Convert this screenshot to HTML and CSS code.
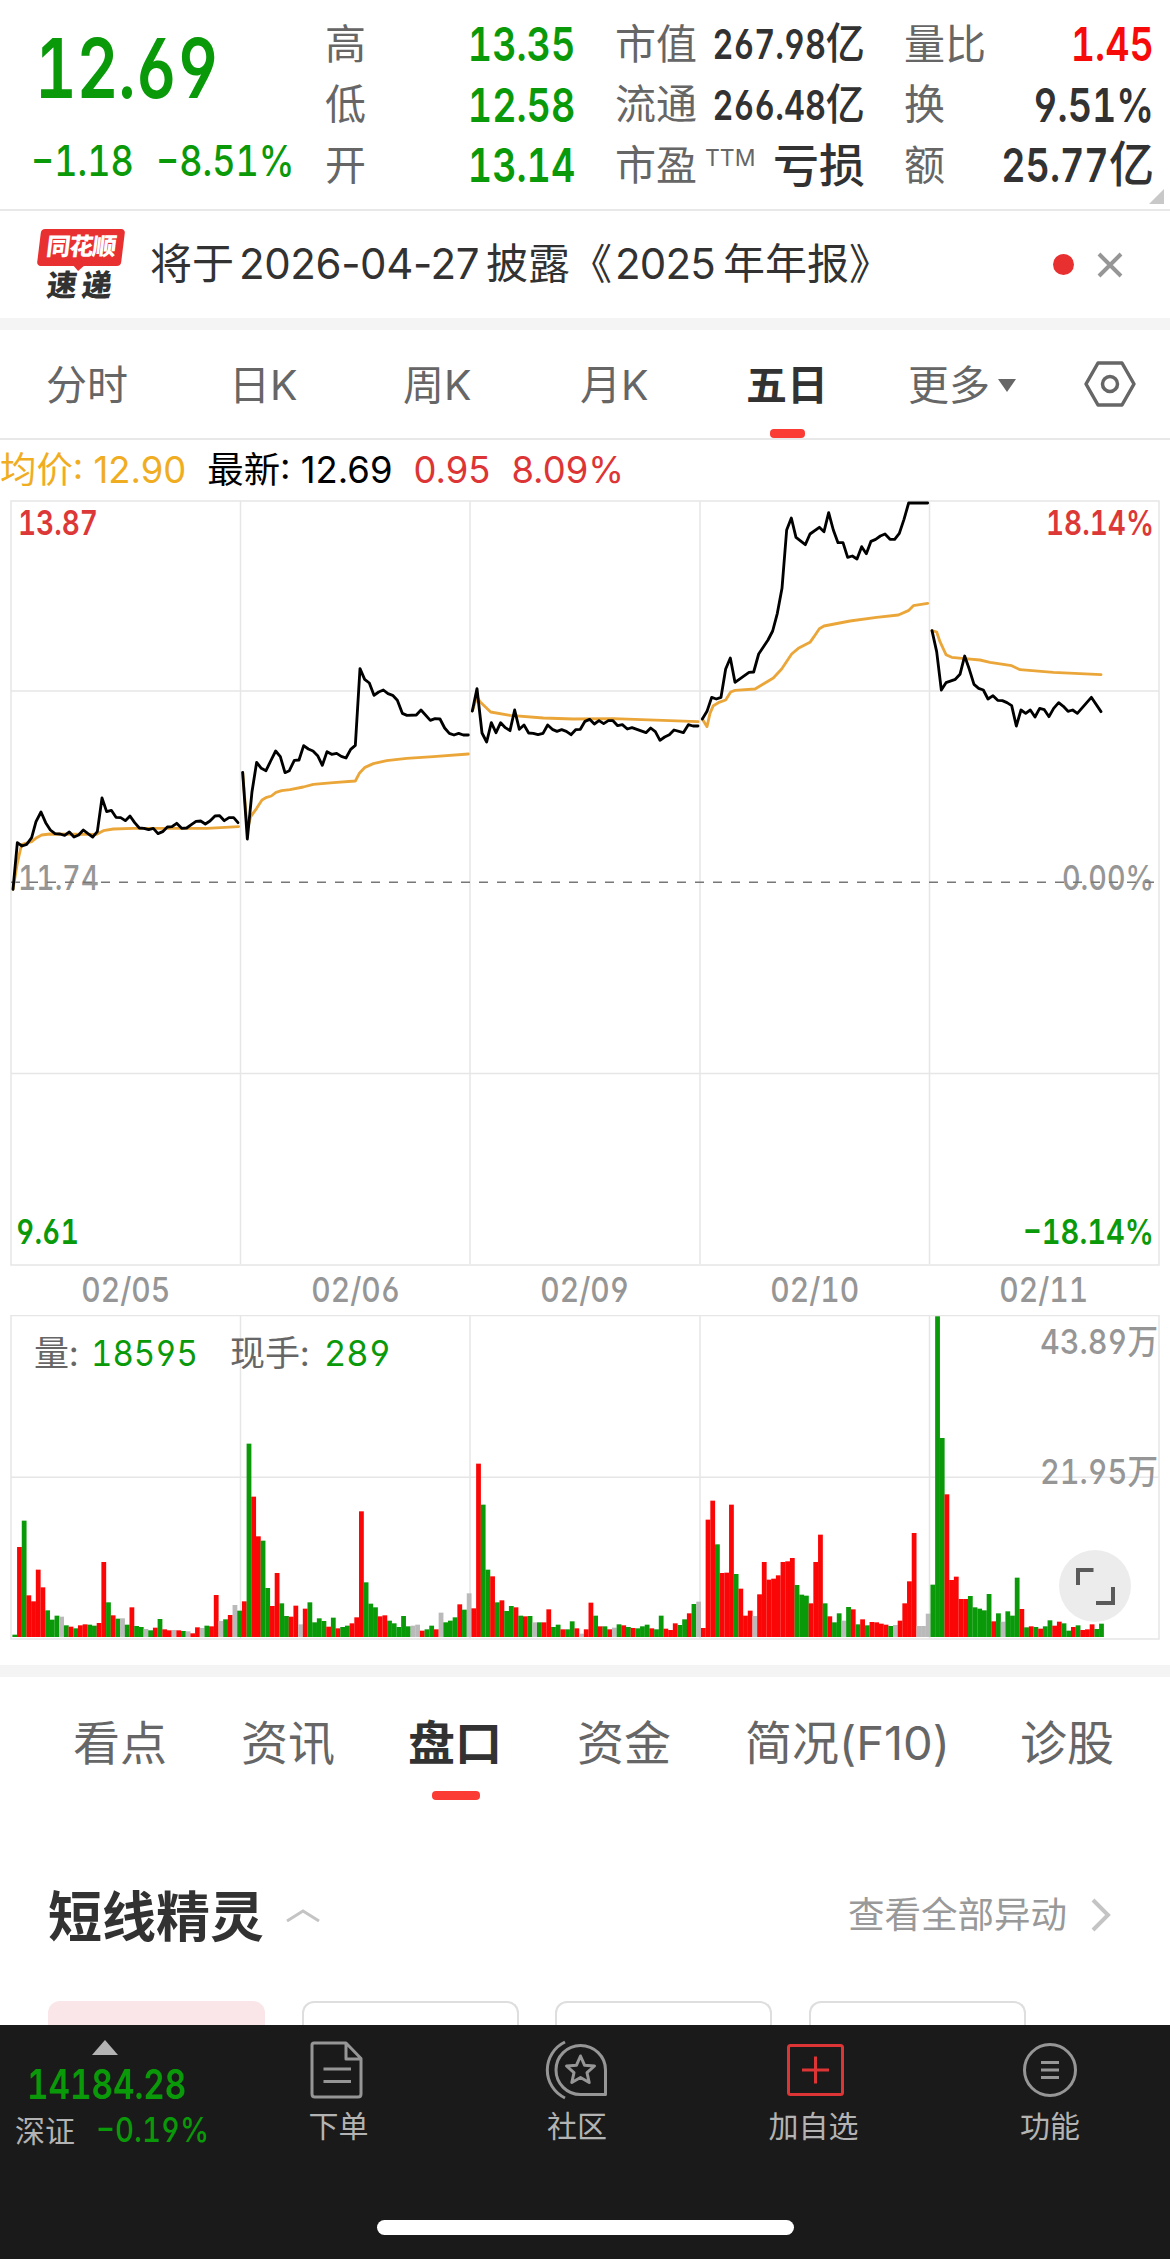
FILE: index.html
```html
<!DOCTYPE html>
<html lang="zh-CN">
<head>
    <meta charset="UTF-8">
    <meta name="viewport" content="width=device-width, initial-scale=1.0">
    <title>五日行情</title>
    <link rel="stylesheet" href="styles.css">
</head>
<body>
    <header class="quote">
        <div class="price">
            <div class="last num">12.69</div>
            <div class="change">
                <span class="num">−1.18</span>
                <span class="num">−8.51%</span>
            </div>
        </div>
        <div class="stats">
            <div class="stat"><label>高</label><b class="num down">13.35</b></div>
            <div class="stat"><label>低</label><b class="num down">12.58</b></div>
            <div class="stat"><label>开</label><b class="num down">13.14</b></div>
        </div>
        <div class="stats">
            <div class="stat"><label>市值</label><b class="num small">267.98<i>亿</i></b></div>
            <div class="stat"><label>流通</label><b class="num small">266.48<i>亿</i></b></div>
            <div class="stat"><label>市盈<sup>TTM</sup></label><b class="cjk">亏损</b></div>
        </div>
        <div class="stats">
            <div class="stat"><label>量比</label><b class="num up">1.45</b></div>
            <div class="stat"><label>换</label><b class="num">9.51%</b></div>
            <div class="stat"><label>额</label><b class="num">25.77<i>亿</i></b></div>
        </div>
        <div class="corner"></div>
    </header>

    <div class="notice">
        <div class="logo">
            <div class="logo-top"><span>同花顺</span></div>
            <div class="logo-bottom">速递</div>
        </div>
        <p class="notice-text">将于<span class="date">2026-04-27</span>披露《<span class="year">2025</span>年年报》</p>
        <i class="dot"></i>
        <svg class="close" width="28" height="28" viewBox="0 0 28 28"><path d="M3 3L25 25M25 3L3 25"/></svg>
    </div>

    <nav class="periods">
        <a class="p1">分时</a>
        <a class="p2">日K</a>
        <a class="p3">周K</a>
        <a class="p4">月K</a>
        <a class="p5 active">五日</a>
        <a class="p6">更多<i class="caret"></i></a>
        <svg class="setting" width="54" height="48" viewBox="0 0 54 48">
            <path d="M15 3H39L51 24L39 45H15L3 24Z"/>
            <circle cx="27" cy="24" r="7.5"/>
        </svg>
    </nav>

    <div class="legend">
        <span class="avg">均价: 12.90</span>
        <span>最新: 12.69</span>
        <span class="red">0.95</span>
        <span class="red">8.09%</span>
    </div>

    <svg class="chart" width="1170" height="766" viewBox="0 500 1170 766">
        <g class="grid">
            <path d="M11 501H1159V1265H11ZM11 691H1159M11 1073.5H1159"/>
            <path d="M240.5 501V1264M470 501V1264M700 501V1264M929.5 501V1264"/>
        </g>
        <g class="axis">
            <text class="red" x="18" y="535" textLength="80" lengthAdjust="spacingAndGlyphs">13.87</text>
            <text class="red right" x="1154" y="535" textLength="108" lengthAdjust="spacingAndGlyphs">18.14%</text>
            <text class="flat" x="18" y="889.5" textLength="81" lengthAdjust="spacingAndGlyphs">11.74</text>
            <text class="flat right" x="1154" y="889.5" textLength="92" lengthAdjust="spacingAndGlyphs">0.00%</text>
            <text class="green" x="16" y="1244" textLength="63" lengthAdjust="spacingAndGlyphs">9.61</text>
            <text class="green right" x="1154" y="1244" textLength="131" lengthAdjust="spacingAndGlyphs">−18.14%</text>
        </g>
        <path class="zero" d="M11 882.3H1154"/>
        <!-- three units per pixel inside each group -->
        <g class="line" transform="translate(0 600) scale(.33333)">
            <polyline class="mean" points="39,868 52,790 62,745 66,733 95,725 110,713 125,705 150,702 290,703 310,692 340,687 400,685 620,685 716,680"/>
            <polyline points="39,868 52,728 66,738 80,733 95,713 108,665 123,636 137,668 151,690 165,701 180,702 194,706 208,696 222,711 236,705 250,690 264,701 278,711 292,695 306,594 320,635 334,631 348,652 362,653 376,662 390,648 404,668 418,684 432,685 446,689 460,685 474,701 488,695 502,681 516,680 530,670 545,685 560,684 574,674 588,664 602,663 616,672 630,663 645,648 659,647 673,662 687,653 701,653 714,668"/>
            <polyline class="mean" points="728,517 742,690 752,650 770,625 786,600 800,592 814,588 828,577 845,572 870,569 910,561 940,553 1000,548 1066,543 1078,520 1095,502 1120,491 1160,482 1220,475 1300,470 1405,462"/>
            <polyline points="728,517 742,717 756,575 770,487 784,505 798,512 812,483 827,453 841,470 855,518 868,512 883,481 897,480 911,437 925,447 939,453 953,467 967,496 981,455 995,463 1010,460 1024,469 1038,474 1052,448 1066,436 1080,206 1094,238 1108,249 1122,286 1136,276 1150,270 1164,281 1178,286 1192,301 1207,340 1221,346 1249,345 1263,330 1291,361 1305,356 1320,357 1334,384 1348,400 1362,405 1376,400 1390,405 1405,405"/>
        </g>
        <g class="line" transform="translate(460 480) scale(.33333)">
            <polyline class="mean" points="37,693 51,650 60,665 92,696 150,706 250,714 340,717 460,716 714,725"/>
            <polyline points="37,693 51,626 66,759 80,786 94,728 108,758 122,728 136,743 150,752 164,690 178,748 192,735 206,759 220,760 234,764 249,760 263,735 277,748 291,754 305,749 319,754 333,764 347,749 361,748 375,724 389,718 403,732 417,722 431,731 445,722 459,722 473,737 487,734 502,747 516,743 558,758 572,744 586,755 600,781 614,771 628,764 642,750 670,758 685,734 699,738 714,738"/>
            <polyline class="mean" points="727,717 741,740 750,700 760,677 775,668 797,660 812,636 825,631 885,627 910,612 940,594 965,567 995,522 1015,505 1050,487 1062,470 1078,446 1092,438 1170,423 1250,412 1315,405 1345,392 1360,377 1403,370"/>
            <polyline points="727,717 741,694 755,652 769,657 783,652 797,567 811,534 825,607 867,577 881,576 896,522 924,480 938,453 952,400 966,325 980,150 994,114 1008,172 1036,194 1050,162 1078,142 1092,155 1106,98 1120,150 1134,188 1149,188 1163,232 1177,228 1191,237 1205,200 1219,221 1233,184 1247,178 1261,168 1275,162 1290,178 1304,178 1318,160 1332,118 1346,69 1403,69"/>
        </g>
        <g class="line" transform="translate(800 480) scale(.33333)">
            <polyline class="mean" points="396,452 410,456 420,485 438,524 455,532 494,536 540,540 570,547 635,557 660,569 760,577 903,584"/>
            <polyline points="396,452 410,515 424,630 438,608 466,598 480,583 494,528 508,568 522,613 536,625 550,630 564,657 579,647 593,661 607,662 621,668 635,677 649,738 663,690 677,700 691,690 705,711 719,685 733,689 747,710 761,685 776,668 790,679 804,694 818,690 832,700 874,652 903,695"/>
        </g>
    </svg>

    <div class="dates">
        <span class="num">02/05</span>
        <span class="num">02/06</span>
        <span class="num">02/09</span>
        <span class="num">02/10</span>
        <span class="num">02/11</span>
    </div>

    <div class="volume">
        <svg class="chart" width="1170" height="350" viewBox="0 1315 1170 350">
            <g class="grid">
                <path d="M11 1315.5H1159V1639H11ZM11 1477.3H1159"/>
                <path d="M240.5 1315V1639M470 1315V1639M700 1315V1639M929.5 1315V1639"/>
            </g>
            <g id="bars"></g>
            <g class="axis">
                <text class="flat right" x="1158" y="1353.7" textLength="118" lengthAdjust="spacingAndGlyphs">43.89万</text>
                <text class="flat right" x="1158" y="1484" textLength="118" lengthAdjust="spacingAndGlyphs">21.95万</text>
            </g>
            <g class="now">
                <text x="34" y="1366">量:</text>
                <text class="green" x="91" y="1366" textLength="107" lengthAdjust="spacingAndGlyphs">18595</text>
                <text x="230" y="1366">现手:</text>
                <text class="green" x="324" y="1366" textLength="67" lengthAdjust="spacingAndGlyphs">289</text>
            </g>
        </svg>
        <button class="expand">
            <svg width="40" height="40" viewBox="0 0 40 40"><path d="M3 19V4H18.5M21 37H38V21"/></svg>
        </button>
    </div>

    <nav class="sections">
        <a class="s1">看点</a>
        <a class="s2">资讯</a>
        <a class="s3 active">盘口</a>
        <a class="s4">资金</a>
        <a class="s5">简况(F10)</a>
        <a class="s6">诊股</a>
    </nav>

    <section class="elf">
        <div class="elf-head">
            <h2>短线精灵</h2>
            <svg class="fold" width="36" height="14" viewBox="0 0 36 14"><path d="M2 13L18 3L34 13"/></svg>
            <a class="more">查看全部异动</a>
            <svg class="next" width="22" height="36" viewBox="0 0 22 36"><path d="M3 3L18 18L3 33"/></svg>
        </div>
        <div class="cards">
            <div class="card pink"></div>
            <div class="card"></div>
            <div class="card"></div>
            <div class="card"></div>
        </div>
    </section>

    <footer class="bar">
        <div class="index">
            <i class="tri"></i>
            <div class="index-value num">14184.28</div>
            <div class="index-row"><span>深证</span><span class="num">−0.19%</span></div>
        </div>
        <a class="tool t1">
            <svg width="60" height="60" viewBox="0 0 60 60">
                <path d="M7 3H39L54 18.500V54Q54 57 51 57H8Q5 57 5 54V5Q5 3 7 3ZM39 3V19H54M16.500 29H44M16.500 41.500H44"/>
            </svg>
            <span>下单</span>
        </a>
        <a class="tool t2">
            <svg width="64" height="60" viewBox="0 0 64 60">
                <path d="M20 2A31 31 0 0 0 20 58"/>
                <path d="M35.500 5.500A24.500 24.500 0 0 0 35.500 54.500H60.500V30A25 24.500 0 0 0 35.500 5.500Z"/>
                <path d="M35.500 16L39.500 25.200L49.500 26L42 32.700L44.200 42.500L35.500 37.500L26.800 42.500L29 32.700L21.500 26L31.500 25.200Z"/>
            </svg>
            <span>社区</span>
        </a>
        <a class="tool t3">
            <svg width="60" height="60" viewBox="0 0 60 60">
                <rect x="4.500" y="5.500" width="54" height="49" rx="2"/>
                <path d="M18 30H45M31.500 16.500V43.500"/>
            </svg>
            <span>加自选</span>
        </a>
        <a class="tool t4">
            <svg width="60" height="60" viewBox="0 0 60 60">
                <circle cx="30" cy="30" r="25.500"/>
                <path d="M21 22.500H39M21 30H39M21 37.500H39"/>
            </svg>
            <span>功能</span>
        </a>
        <div class="home"></div>
    </footer>

    <script src="volume.js"></script>
</body>
</html>
```
FILE: styles.css
```css
* {
    box-sizing: border-box;
}

body {
    width: 1170px;
    height: 2259px;
    margin: 0;
    overflow: hidden;
    display: flex;
    flex-direction: column;
    background: #fff;
    color: #323232;
    font-family: "Inter", "Noto Sans CJK SC", sans-serif;
}

svg {
    display: block;
    fill: none;
}

i, b {
    font-style: normal;
}

.num {
    font-feature-settings: "tnum", "cv03", "cv04";
    font-weight: 600;
    white-space: nowrap;
}

.up { color: #f60a0a; }
.down { color: #099909; }

/* quote header */
.quote {
    position: relative;
    display: grid;
    grid-template-columns: 326px 290px 289px 249px;
    height: 211px;
    border-bottom: 2px solid #e8e8e8;
}

.price {
    padding: 19px 0 0 35px;
    color: #099909;
}

.stats {
    width: 249px;
    padding-top: 14px;
}

.last {
    font-size: 82px;
    line-height: 100px;
    transform: scaleX(.785);
    transform-origin: left;
}

.change {
    display: flex;
    margin: 17px 0 0 -4px;
    font-size: 42px;
    line-height: 50px;
}

.change .num {
    width: 125px;
    font-weight: 500;
    transform: scaleX(.855);
    transform-origin: left;
}

.stat {
    display: flex;
    align-items: center;
    justify-content: space-between;
    height: 60.5px;
    line-height: 60px;
}

.stat label {
    margin: -1px -40px 0 -1px;
    color: #666;
    font-size: 41px;
    white-space: nowrap;
}

.stat sup {
    margin-left: 8px;
    font-size: 23px;
    line-height: 0;
    vertical-align: 14px;
}

.stat b {
    font-size: 47px;
    transform: scaleX(.8);
    transform-origin: right;
}

.stat b i {
    display: inline-block;
    margin-left: 8px;
    font-size: 49px;
    font-weight: 500;
    line-height: 1;
    transform: scaleX(1.15);
    transform-origin: right;
}

.stat .small {
    font-size: 41px;
    transform: scaleX(.79);
}

.stat .small i {
    margin-left: 6px;
    font-size: 43px;
}

.stat .cjk {
    font-size: 46px;
    font-weight: 500;
    transform: none;
}

.corner {
    position: absolute;
    right: 6px;
    bottom: 5px;
    border-left: 15px solid transparent;
    border-bottom: 15px solid #c8c8c8;
}

/* notice */
.notice {
    display: flex;
    align-items: center;
    height: 119px;
    padding-left: 37px;
    border-bottom: 12px solid #f4f4f4;
}

.logo {
    width: 88px;
    height: 72px;
}

.logo-top {
    position: relative;
    width: 84px;
    height: 37px;
    margin-left: 2px;
    border-radius: 4px;
    background: #e93030;
    transform: skewX(-7deg);
    text-align: center;
}

.logo-top::after {
    content: "";
    position: absolute;
    left: 36px;
    top: 36px;
    border: 6px solid transparent;
    border-top-color: #e93030;
    border-bottom: 0;
}

.logo-top span {
    display: block;
    color: #fff;
    font-size: 24px;
    line-height: 36px;
    font-weight: 900;
    letter-spacing: -1px;
}

.logo-bottom {
    padding-left: 10px;
    font-size: 30px;
    line-height: 39px;
    font-weight: 900;
    letter-spacing: 5px;
    transform: skewX(-7deg);
    white-space: nowrap;
}

.notice-text {
    width: 903px;
    margin: -1px 0 0 25px;
    font-size: 42px;
    line-height: 60px;
    white-space: nowrap;
}

.date {
    margin: 0 7px 0 5px;
    letter-spacing: -.4px;
}

.year {
    margin: 0 8px 0 3px;
    letter-spacing: -.8px;
}

.dot {
    width: 21px;
    height: 21px;
    border-radius: 50%;
    background: #e93030;
}

.close {
    margin-left: 22px;
    stroke: #969696;
    stroke-width: 4;
}

/* period tabs */
.periods {
    display: grid;
    grid-template-columns: 183px 174px 177px 166px 162px 175px 1fr;
    align-items: center;
    height: 110px;
    padding-left: 46px;
    border-bottom: 2px solid #e8e8e8;
    color: #666;
    font-size: 41px;
    white-space: nowrap;
}

.periods a {
    height: 108px;
    line-height: 111px;
}

.active {
    position: relative;
    color: #323232;
    font-weight: 700;
}

.active::after {
    content: "";
    position: absolute;
    left: 24px;
    bottom: 0;
    width: 35px;
    height: 9px;
    border-radius: 4px;
    background: #fa3c34;
}

.caret {
    display: inline-block;
    margin-left: 8px;
    border: 9.5px solid transparent;
    border-top: 13px solid #666;
    border-bottom: 0;
    vertical-align: 8px;
}

.setting {
    stroke: #666;
    stroke-width: 3.5;
    stroke-linejoin: round;
}

/* chart */
.legend {
    display: flex;
    gap: 21px;
    height: 60px;
    color: #000;
    font-size: 36.400px;
    line-height: 60px;
    white-space: nowrap;
}

.legend .avg {
    color: #f0ad22;
}

.legend .red {
    color: #dd3535;
}

.chart text {
    font-family: "Inter", "Noto Sans CJK SC", sans-serif;
    font-feature-settings: "tnum", "cv03", "cv04";
}

.grid {
    stroke: #e6e6e6;
    stroke-width: 1.5;
}

.axis text {
    font-size: 34.5px;
    font-weight: 600;
}

.axis .right {
    text-anchor: end;
}

.axis .flat {
    fill: #969696;
    font-weight: 500;
}

.axis .red {
    fill: #dd3838;
}

.chart .green {
    fill: #099909;
}

.zero {
    stroke: #777;
    stroke-width: 1.5;
    stroke-dasharray: 9 9;
}

.line polyline {
    stroke: #000;
    stroke-width: 8.5;
    stroke-linejoin: round;
    stroke-linecap: round;
}

.line .mean {
    stroke: #eba63a;
}

.dates {
    display: flex;
    height: 49px;
    padding: 0 11px;
    color: #969696;
    font-size: 34.5px;
    line-height: 47px;
}

.dates .num {
    flex: 1;
    text-align: center;
    font-weight: 500;
    transform: scaleX(.87);
}

.volume {
    position: relative;
    height: 362px;
    border-bottom: 12px solid #f4f4f4;
}

.now {
    font-size: 35px;
    fill: #666;
}

.expand {
    position: absolute;
    left: 1059px;
    top: 235px;
    display: flex;
    align-items: center;
    justify-content: center;
    width: 72px;
    height: 72px;
    padding: 0 1px 1px 0;
    border: 0;
    border-radius: 50%;
    background: #ececec;
}

.expand path {
    stroke: #5a5a5a;
    stroke-width: 4;
}

/* section tabs */
.sections {
    display: grid;
    grid-template-columns: 168px 167px 169px 168px 275px 1fr;
    height: 124px;
    padding-left: 73px;
    color: #666;
    font-size: 47px;
    line-height: 132px;
    white-space: nowrap;
}

.sections .active::after {
    width: 48px;
    top: 114px;
}

.elf {
    height: 224px;
    padding: 81px 48px 0;
}

.elf-head {
    display: flex;
    align-items: center;
    height: 66px;
}

.elf h2 {
    margin: 5px 0 0;
    font-size: 54px;
    line-height: 66px;
    font-weight: 600;
}

.fold {
    margin: 0 0 0 21px;
    stroke: #c4c4c4;
    stroke-width: 3;
}

.more {
    margin-left: auto;
    color: #999;
    font-size: 36.500px;
    line-height: 60px;
}

.next {
    margin: 0 10px 0 23px;
    stroke: #c4c4c4;
    stroke-width: 4;
}

.cards {
    display: flex;
    gap: 36.500px;
    margin-top: 53px;
}

.card {
    width: 217px;
    height: 24px;
    border: 2px solid #dedede;
    border-bottom: 0;
    border-radius: 12px 12px 0 0;
}

.pink {
    border: 0;
    background: #fae6e8;
}

/* bottom bar */
.bar {
    position: relative;
    display: grid;
    grid-template-columns: 215px 247px 230px 243px 230px;
    height: 234px;
    background: #1a1a1a;
    color: #b3b3b3;
    font-size: 30px;
}

.index {
    padding-top: 15px;
}

.tri {
    display: block;
    width: 0;
    margin-left: 92px;
    border: 13px solid transparent;
    border-bottom: 15px solid #b3b3b3;
    border-top: 0;
}

.index-value {
    margin: 8px 0 0 27px;
    color: #099909;
    font-size: 41px;
    line-height: 42px;
    transform: scaleX(.81);
    transform-origin: left;
}

.index-row {
    display: flex;
    align-items: center;
    margin-top: 4px;
    padding-left: 15px;
    line-height: 44px;
    white-space: nowrap;
}

.index-row .num {
    margin: -3px 0 0 21px;
    color: #099909;
    font-size: 34.500px;
    font-weight: 500;
    transform: scaleX(.85);
    transform-origin: left;
}

.tool {
    display: flex;
    flex-direction: column;
    align-items: center;
    padding-top: 15px;
}

.tool span {
    margin-top: 5px;
    line-height: 42px;
}

.tool svg {
    stroke: #969696;
    stroke-width: 3;
    stroke-linejoin: round;
}

.t1 svg {
    margin-right: 4px;
}

.t3 svg {
    stroke: #dd3535;
}

.home {
    position: absolute;
    left: 377px;
    bottom: 24px;
    width: 417px;
    height: 15px;
    border-radius: 8px;
    background: #fff;
}
```
FILE: volume.js
```javascript
// r = up, g = down, n = unchanged; the number is the bar size, 962 is the top of the axis
const volume = `
g7 r270 g349 r125 r107 r202 r149 g80 g52 g64 n61 g35 r31 g26 r35 r38 g37 g34 r42 r225 g104 r65 g55 n56 g37
r89 g33 g30 n24 g20 r28 g54 r23 r20 n21 r20 g18 n17 r11 r29 n27 g34 r32 r126 n48 g53 r66 n96 g79 r107
g580 r421 r302 g289 g147 r93 r192 g101 g63 r61 r94 n38 r85 g104 g44 g56 g48 r31 g58 r26 g30 g34 r41 r59 r377
g164 g100 g89 r62 r65 g49 g41 g30 g63 g32 n34 n37 r19 g23 g34 r23 n73 g44 g49 g59 r98 g82 n131 r86
r520 g397 g202 r182 g104 r110 g78 g93 r89 g64 r62 g63 n44 g44 r44 r83 g30 g37 r23 g23 g47 r26 n10 r23 r103
g64 r32 g32 r23 n28 g38 r35 g30 r27 g26 g32 g37 r26 g23 g64 r25 r21 r41 g36 g53 r71 g99 n106 r27
r352 r409 g278 r192 r193 r397 g189 r145 r64 r79 n63 r128 r225 r172 r175 r185 r225 r227 r237 g156 g127 g124 r101 r225 r307
g101 r62 g44 g71 n49 g90 r83 g38 r53 g35 r45 r44 r40 r37 g33 n36 r49 r101 r167 r312 n33 n33 n70
g157 g962 g597 r428 r171 r181 r114 r114 g123 g89 g85 g80 g129 r47 g71 n46 g77 g64 g178 r84 g29 r32 g30 r25 g32
g50 r34 r46 g41 g19 r30 g35 r21 r23 r38 g24 g40
`.trim().split(/\s+/);

const colors = { r: '#fb0606', g: '#099909', n: '#bababa' };
const step = 4.684;
const base = 1637;
const bars = document.getElementById('bars');

volume.forEach((item, i) => {
    const h = Number(item.slice(1)) / 962 * 320.7;
    const rect = document.createElementNS('http://www.w3.org/2000/svg', 'rect');
    rect.setAttribute('x', (12.4 + i * step).toFixed(2));
    rect.setAttribute('y', (base - h).toFixed(2));
    rect.setAttribute('width', step + 0.1);
    rect.setAttribute('height', h.toFixed(2));
    rect.setAttribute('fill', colors[item[0]]);
    bars.appendChild(rect);
});
```
